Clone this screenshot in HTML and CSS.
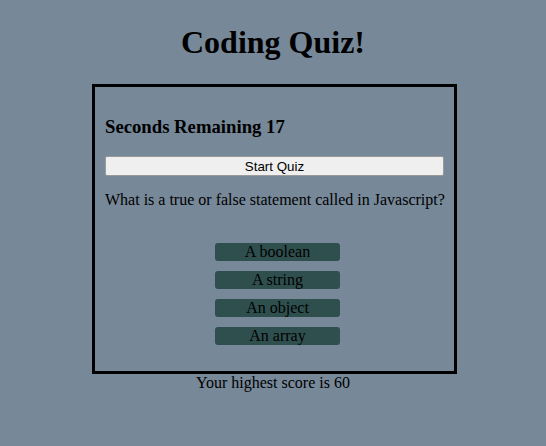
FILE: index.html
```html
<!DOCTYPE html>
<html>
<head>
<meta charset="utf-8">
<title>Coding Quiz</title>
<link rel="stylesheet" href="styles.css">
</head>
<body>
<h1 class="title">Coding Quiz!</h1>
<div class="quiz">
  <h3 class="timer">Seconds Remaining 17</h3>
  <button class="start">Start Quiz</button>
  <p class="question">What is a true or false statement called in Javascript?</p>
  <div class="answers">
    <button class="answer">A boolean</button>
    <button class="answer">A string</button>
    <button class="answer">An object</button>
    <button class="answer">An array</button>
  </div>
</div>
<div class="score">Your highest score is 60</div>
</body>
</html>
```

FILE: styles.css
```css
html, body {
  margin: 0;
  padding: 0;
}
body {
  background: #778899;
  font-family: "Liberation Serif", "Times New Roman", serif;
  font-size: 16px;
  color: #000;
}
.title {
  text-align: center;
  font-size: 32px;
  font-weight: bold;
  line-height: 37px;
  margin: 24px 0 23px;
}
.quiz {
  width: 339px;
  margin-left: 92px;
  border: 3px solid #000;
  padding: 0 10px 26px;
}
.timer {
  font-size: 18.72px;
  font-weight: bold;
  line-height: 21px;
  margin: 29px 0 19px;
}
.start {
  display: block;
  width: 100%;
  height: 20px;
  padding: 0 6px;
  margin: 0;
  background: #efefef;
  border: 1px solid #9a9a9a;
  border-radius: 2px;
  font-family: "Liberation Sans", Arial, sans-serif;
  font-size: 13.33px;
  color: #000;
}
.question {
  margin: 15px 0 34px;
  line-height: 18px;
  white-space: nowrap;
}
.answers {
  display: flex;
  flex-direction: column;
  align-items: center;
  gap: 10px;
  padding-left: 6px;
}
.answer {
  width: 125px;
  height: 18px;
  padding: 0;
  margin: 0;
  border: none;
  border-radius: 3px;
  background: #2f4f4f;
  font-family: "Liberation Serif", "Times New Roman", serif;
  font-size: 16px;
  line-height: 18px;
  color: #000;
}
.score {
  text-align: center;
  line-height: 18px;
}
```
